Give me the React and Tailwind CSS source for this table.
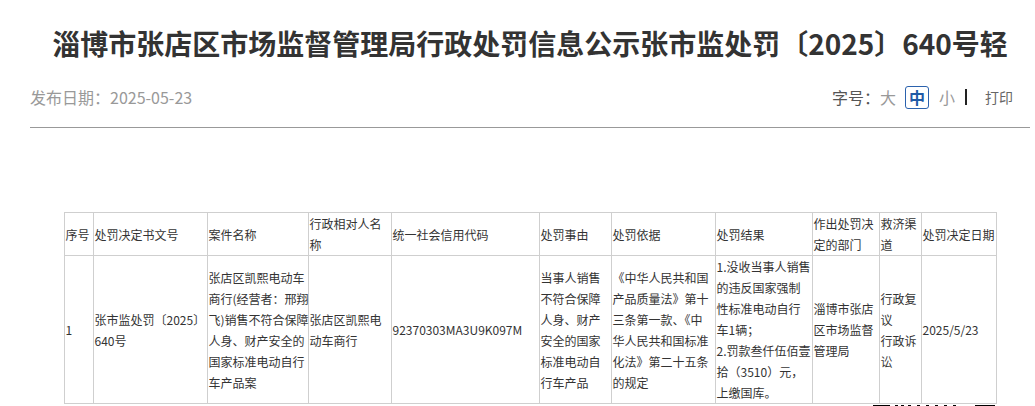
import React from "react";

const cols = [29, 114, 101, 83, 148, 72, 104, 97, 67, 42, 75];

const headers = [
  ["序号"],
  ["处罚决定书文号"],
  ["案件名称"],
  ["行政相对人名", "称"],
  ["统一社会信用代码"],
  ["处罚事由"],
  ["处罚依据"],
  ["处罚结果"],
  ["作出处罚决", "定的部门"],
  ["救济渠", "道"],
  ["处罚决定日期"],
];

const row = [
  ["1"],
  ["张市监处罚〔2025〕", "640号"],
  ["张店区凯熙电动车", "商行(经营者：邢翔", "飞)销售不符合保障", "人身、财产安全的", "国家标准电动自行", "车产品案"],
  ["张店区凯熙电", "动车商行"],
  ["92370303MA3U9K097M"],
  ["当事人销售", "不符合保障", "人身、财产", "安全的国家", "标准电动自", "行车产品"],
  ["《中华人民共和国", "产品质量法》第十", "三条第一款、《中", "华人民共和国标准", "化法》第二十五条", "的规定"],
  ["1.没收当事人销售", "的违反国家强制", "性标准电动自行", "车1辆；", "2.罚款叁仟伍佰壹", "拾（3510）元，", "上缴国库。"],
  ["淄博市张店", "区市场监督", "管理局"],
  ["行政复", "议", "行政诉", "讼"],
  ["2025/5/23"],
];

// tops of the scanned image that starts under the table
const strip = [
  [873, 890], [895, 898], [901, 904], [908, 911], [917, 920],
  [926, 929], [935, 938], [944, 947], [953, 956], [975, 995],
];

function Lines({ lines }) {
  return lines.map((l, i) => (
    <div key={i} className="whitespace-nowrap">
      {l}
    </div>
  ));
}

export default function App() {
  return (
    <div className="bg-white w-[1035px] h-[406px] overflow-hidden font-['Noto_Sans_CJK_SC',sans-serif]">
      <div className="ml-[30px] w-[1000px]">
        <h1 className="pt-[23px] text-center text-[28px] leading-[40px] font-bold text-[#333] whitespace-nowrap">
          淄博市张店区市场监督管理局行政处罚信息公示张市监处罚〔2025〕640号轻
        </h1>

        <div className="mt-[22px] flex items-center justify-between h-[24px]">
          <span className="text-[16px] leading-[24px] text-[#999]">发布日期：2025-05-23</span>
          <div className="flex items-center pr-[17px] text-[16px] leading-[24px]">
            <span className="text-[#555]">字号：</span>
            <span className="text-[#999]">大</span>
            <span className="ml-[9px] flex h-[23px] w-[24px] items-center justify-center rounded-[3px] border border-[#2b62ad] font-bold text-[#1f5aa6]">
              中
            </span>
            <span className="ml-[10px] text-[#999]">小</span>
            <span className="ml-[10px] h-[16px] w-[2px] bg-[#222]"></span>
            <span className="ml-[18px] text-[14px] text-[#666]">打印</span>
          </div>
        </div>

        <div className="mt-[18px] border-b border-[#999]"></div>

        <table className="mx-auto mt-[84px] w-[932px] table-fixed border-collapse text-[12px] leading-[21px] text-[#333]">
          <colgroup>
            {cols.map((w, i) => (
              <col key={i} style={{ width: w }} />
            ))}
          </colgroup>
          <tbody>
            <tr>
              {headers.map((h, i) => (
                <td key={i} className="border border-[#cfcfcf] px-[1px] py-0 align-middle">
                  <Lines lines={h} />
                </td>
              ))}
            </tr>
            <tr>
              {row.map((c, i) => (
                <td key={i} className="border border-[#cfcfcf] px-[1px] py-0 align-middle">
                  <Lines lines={c} />
                </td>
              ))}
            </tr>
          </tbody>
        </table>

        <div className="relative h-[3px]">
          {strip.map(([a, b], i) => (
            <span
              key={i}
              className="absolute top-[1px] h-[3px] bg-black"
              style={{ left: a - 30, width: b - a }}
            />
          ))}
        </div>
      </div>
    </div>
  );
}
